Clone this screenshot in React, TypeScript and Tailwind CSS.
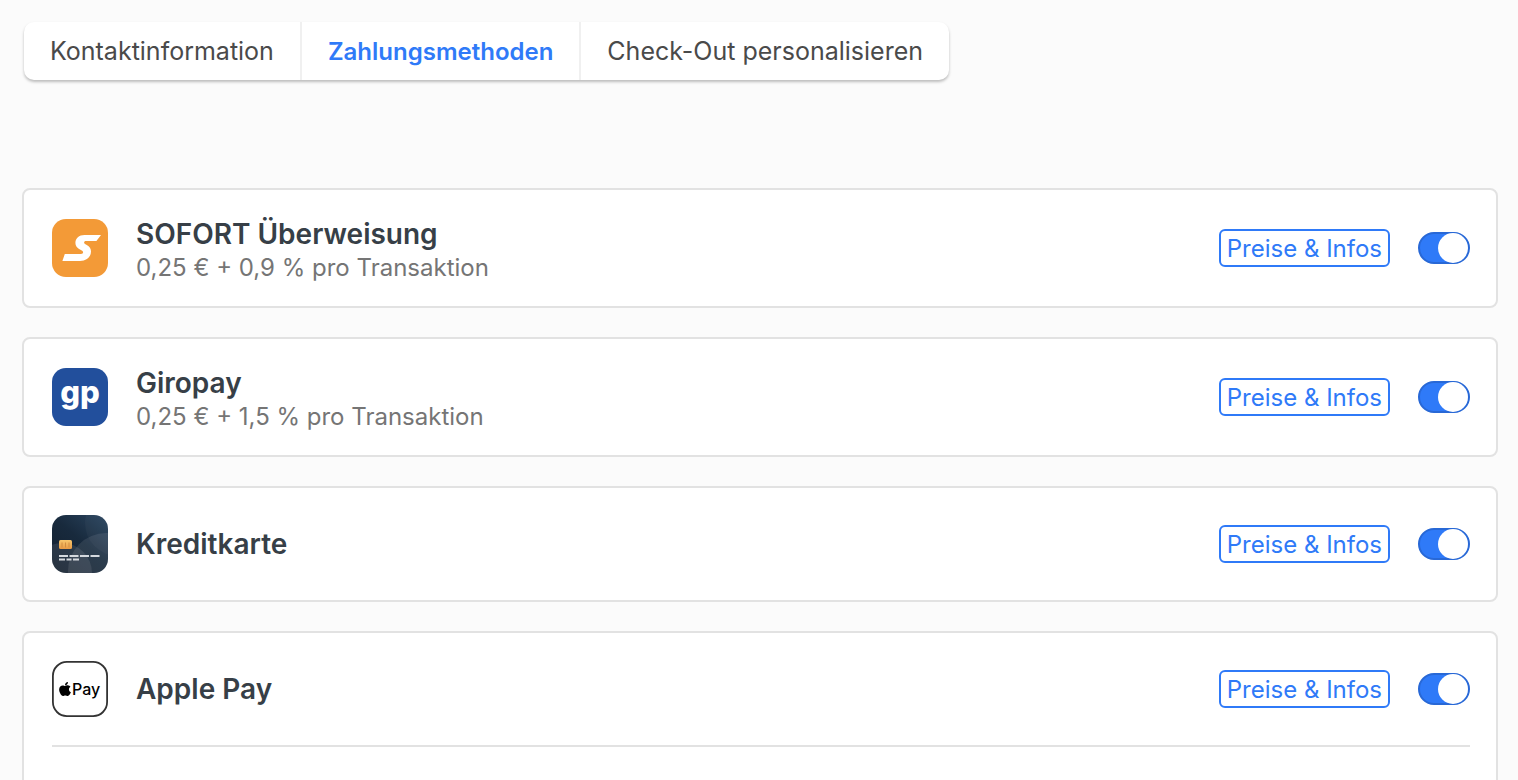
import React, { useState } from 'react';
import { FaApple } from 'react-icons/fa';
import clsx from 'clsx';

const SofortIcon = () => (
  <svg className="w-14 h-[58px] shrink-0" viewBox="0 0 56 58" aria-hidden="true">
    <rect width="56" height="58" rx="14" fill="#f39a37" />
    <path
      d="M49 16H32.5C27 16 23.4 19.5 23.4 24C23.4 27 25 29 28 30.6L30.2 31.8C31.8 32.8 31.2 35 29 35H12.8L10.4 42H28C34.5 42 39 37.8 39 32.4C39 29.6 37.6 27.4 34.8 25.9L33 24.9C31.4 23.9 32 22 34 22H44.4Z"
      fill="#fff"
    />
  </svg>
);

const GiropayIcon = () => (
  <svg className="w-14 h-[58px] shrink-0" viewBox="0 0 56 58" aria-hidden="true">
    <rect width="56" height="58" rx="14" fill="#224f9c" />
    <text x="28" y="35" textAnchor="middle" fill="#fff" fontFamily="Inter, sans-serif" fontSize="31" fontWeight="800">
      gp
    </text>
  </svg>
);

const CardIcon = () => (
  <svg className="w-14 h-[58px] shrink-0" viewBox="0 0 56 58" aria-hidden="true">
    <defs>
      <linearGradient id="card-bg" x1="1" y1="0" x2="0.2" y2="1">
        <stop offset="0" stopColor="#2b4560" />
        <stop offset="0.5" stopColor="#182a3d" />
        <stop offset="1" stopColor="#142130" />
      </linearGradient>
      <linearGradient id="card-chip" x1="0" y1="0" x2="0" y2="1">
        <stop offset="0" stopColor="#f7c66c" />
        <stop offset="1" stopColor="#e89a45" />
      </linearGradient>
      <clipPath id="card-clip">
        <rect width="56" height="58" rx="14" />
      </clipPath>
    </defs>
    <g clipPath="url(#card-clip)">
      <rect width="56" height="58" fill="url(#card-bg)" />
      <circle cx="10" cy="58" r="30" fill="#fff" opacity="0.09" />
      <circle cx="54" cy="56" r="38" fill="#fff" opacity="0.09" />
      <circle cx="66" cy="8" r="33" fill="#fff" opacity="0.03" />
    </g>
    <rect x="7" y="25" width="13" height="9" rx="1.5" fill="url(#card-chip)" />
    <path d="M10 27.5V32.5M13.5 27.5V32.5M17 27.5V32.5" stroke="#cf8c40" strokeWidth="1" />
    <path d="M7 41H16M17.5 41H26.5M28 41H37M38.5 41H47.5" stroke="#d5d9de" strokeWidth="2" />
    <path d="M7 44.5H13M14.5 44.5H19.5M21 44.5H27" stroke="#d5d9de" strokeWidth="2" />
  </svg>
);

const ApplePayIcon = () => (
  <svg className="w-14 h-14 shrink-0" viewBox="0 0 56 56" aria-hidden="true">
    <rect x="0.9" y="0.9" width="54.2" height="54.2" rx="14" fill="#fff" stroke="#333" strokeWidth="1.8" />
    <FaApple x="5" y="20" width="14" height="14.5" color="#000" />
    <text x="20" y="34" fill="#000" fontFamily="Inter, sans-serif" fontSize="16" fontWeight="500">
      Pay
    </text>
  </svg>
);

interface PaymentMethod {
  id: string;
  name: string;
  fee?: string;
  icon: React.FC;
  expanded?: boolean;
}

const methods: PaymentMethod[] = [
  { id: 'sofort', name: 'SOFORT Überweisung', fee: '0,25 € + 0,9 % pro Transaktion', icon: SofortIcon },
  { id: 'giropay', name: 'Giropay', fee: '0,25 € + 1,5 % pro Transaktion', icon: GiropayIcon },
  { id: 'card', name: 'Kreditkarte', icon: CardIcon },
  { id: 'apple', name: 'Apple Pay', icon: ApplePayIcon, expanded: true },
];

const tabs = ['Kontaktinformation', 'Zahlungsmethoden', 'Check-Out personalisieren'];

const MethodCard: React.FC<{ method: PaymentMethod }> = ({ method }) => {
  const [enabled, setEnabled] = useState(true);
  const Icon = method.icon;

  return (
    <li className={clsx('bg-white border-2 border-[#e2e2e2] rounded-lg pl-7 pr-[26px]', method.expanded && 'pb-24')}>
      <div className={clsx('flex items-center gap-7 py-6', method.expanded && 'border-b-2 border-[#e2e2e2]')}>
        <Icon />
        <div className="flex-1 min-h-16 flex flex-col justify-center">
          <label htmlFor={method.id} className="text-[28px] leading-10 font-semibold text-[#373f47]">
            {method.name}
          </label>
          {method.fee && <p className="text-2xl leading-7 text-[#757575]">{method.fee}</p>}
        </div>
        <button
          type="button"
          className="h-[38px] px-[6px] pt-[2px] border-2 border-[#2f7af8] rounded-md text-2xl leading-8 text-[#2f7af8] whitespace-nowrap"
        >
          Preise &amp; Infos
        </button>
        <input
          id={method.id}
          type="checkbox"
          role="switch"
          checked={enabled}
          onChange={e => setEnabled(e.target.checked)}
          className="appearance-none flex items-center shrink-0 w-[52px] h-8 rounded-full border-2 border-[#2868d6] bg-[#2f7af8] cursor-pointer before:w-[30px] before:h-[30px] before:shrink-0 before:rounded-full before:bg-white checked:before:ml-auto not-checked:bg-gray-300 not-checked:border-gray-300"
        />
      </div>
    </li>
  );
};

export default function App() {
  const [active, setActive] = useState(1);

  return (
    <main className="h-screen overflow-hidden bg-[#fbfbfb] pt-[22px] pl-[22px] pr-5 font-['Inter',sans-serif]">
      <nav className="ml-[2px] inline-flex bg-white rounded-[10px] shadow-[0_2px_3px_rgba(0,0,0,0.25)] divide-x-2 divide-[#f0f0f0]">
        {tabs.map((tab, i) => (
          <button
            key={tab}
            type="button"
            onClick={() => setActive(i)}
            className={clsx(
              'h-[58px] px-[26px] pt-[2px] whitespace-nowrap',
              i === active ? 'text-2xl font-semibold text-[#2f7af8]' : 'text-[25px] text-[#4a4a4a]'
            )}
          >
            {tab}
          </button>
        ))}
      </nav>

      <ul className="mt-[108px] flex flex-col gap-[29px]">
        {methods.map(method => (
          <MethodCard key={method.id} method={method} />
        ))}
      </ul>
    </main>
  );
}
